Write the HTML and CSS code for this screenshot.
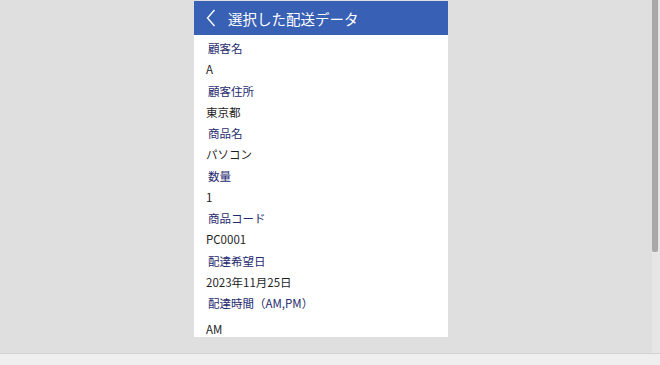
FILE: index.html
```html
<!DOCTYPE html>
<html lang="ja">
<head>
    <meta charset="UTF-8">
    <title>選択した配送データ</title>
    <link rel="stylesheet" href="styles.css">
</head>
<body>
    <div class="stage">
        <div class="canvas">
            <div class="panel">
                <div class="header">
                    <svg class="back" width="10" height="18" viewBox="0 0 10 18">
                        <polyline points="8.5,1 1.5,9 8.5,17" fill="none" stroke="#fff" stroke-width="1.4"/>
                    </svg>
                    <span class="title">選択した配送データ</span>
                </div>
                <div class="fields">
                    <div class="field"><div class="label">顧客名</div><div class="value">A</div></div>
                    <div class="field"><div class="label">顧客住所</div><div class="value">東京都</div></div>
                    <div class="field"><div class="label">商品名</div><div class="value">パソコン</div></div>
                    <div class="field"><div class="label">数量</div><div class="value">1</div></div>
                    <div class="field"><div class="label">商品コード</div><div class="value">PC0001</div></div>
                    <div class="field"><div class="label">配達希望日</div><div class="value">2023年11月25日</div></div>
                    <div class="field last"><div class="label">配達時間（AM,PM）</div><div class="value">AM</div></div>
                </div>
            </div>
        </div>
        <div class="scroll"><div class="thumb"></div></div>
    </div>
    <div class="footer"></div>
</body>
</html>
```

FILE: styles.css
```css
body {
    margin: 0;
    height: 365px;
    overflow: hidden;
    background: #dfdfdf;
    font-family: "Noto Sans CJK JP", "Noto Sans", sans-serif;
    display: flex;
    flex-direction: column;
}
.stage {
    height: 353px;
    display: flex;
}
.canvas {
    flex: 1;
    padding-top: 1px;
}
.panel {
    width: 254px;
    height: 336px;
    margin-left: 194px;
    background: #fff;
    overflow: hidden;
}
.header {
    height: 34px;
    background: #3860b4;
    display: flex;
    align-items: center;
    padding-left: 12px;
}
.back {
    margin-right: 12px;
}
.title {
    color: #fff;
    font-size: 14.5px;
}
.fields {
    padding-top: 3px;
}
.field .label {
    padding-left: 14px;
    font-size: 11.5px;
    line-height: 21px;
    color: #1f2b6e;
}
.field .value {
    padding-left: 12px;
    font-size: 11.5px;
    line-height: 21.5px;
    color: #1e1e1e;
}
.field.last .value {
    margin-top: 5px;
}
.scroll {
    width: 8px;
    background: #e6e6e6;
}
.thumb {
    width: 6px;
    height: 252px;
    background: #a8a8a8;
    border-radius: 0 0 2px 2px;
}
.footer {
    flex: 1;
    background: #efefef;
    border-top: 1px solid #d2d2d2;
}
```
